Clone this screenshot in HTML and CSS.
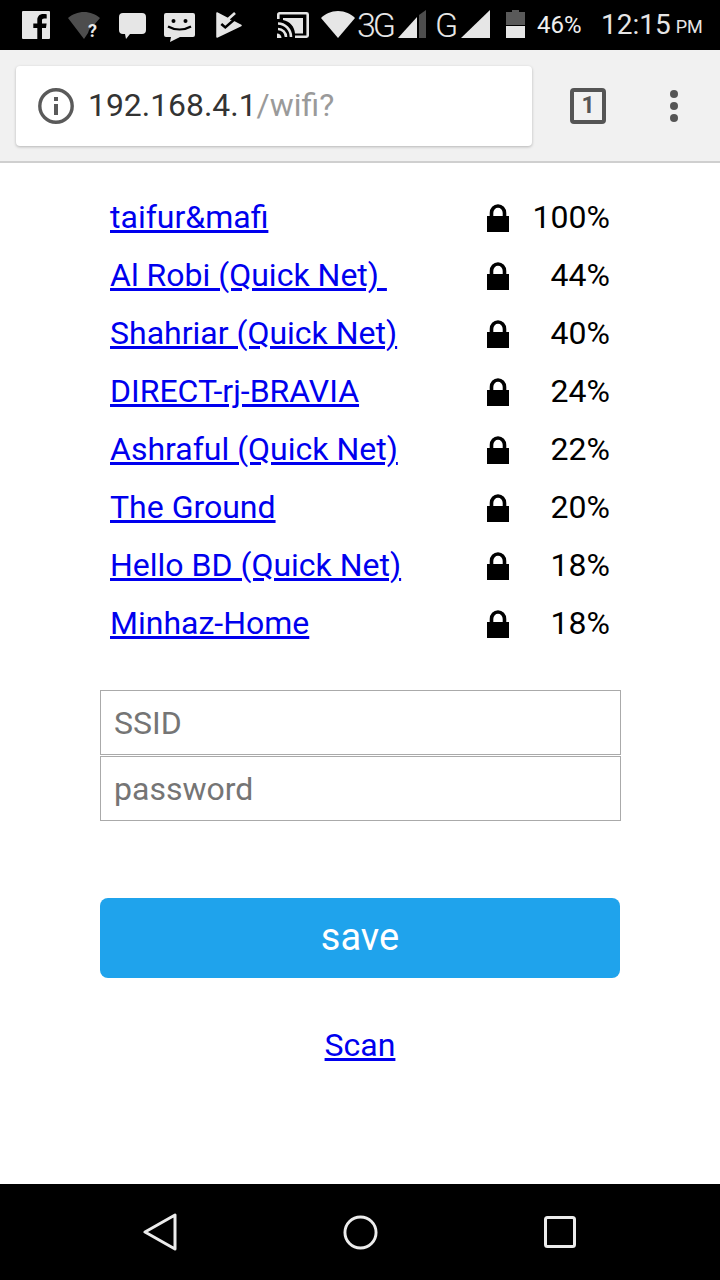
FILE: index.html
```html
<!DOCTYPE html>
<html lang="en">
<head>
    <meta charset="UTF-8">
    <title>192.168.4.1/wifi?</title>
    <link rel="stylesheet" href="styles.css">
</head>
<body>
    <div id="phone">
        <div class="status-bar">
            <svg class="ic ic-fb" width="28" height="28" viewBox="0 0 28 28"><path fill="#e6e6e6" d="M1 0h26a1 1 0 0 1 1 1v26a1 1 0 0 1-1 1h-7V17h4l.6-4.6H20V9.6c0-1.4.4-2.2 2.3-2.2h2.4V3.3c-.5 0-1.900-.2-3.500-.2-3.500 0-5.900 2.100-5.900 6v3.300h-4V17h4v11H1a1 1 0 0 1-1-1V1a1 1 0 0 1 1-1z"/></svg>
            <svg class="ic ic-wifiq" width="33" height="30" viewBox="0 0 33 30"><path fill="#4d4d4d" d="M0 6C4 2.500 10 0 16 0s12 2.500 16 6l-6 7c-3 1-5 4-6 8l-4 6z"/><text x="20" y="25" class="q-mark">?</text></svg>
            <svg class="ic ic-bubble" width="27" height="26" viewBox="0 0 27 26"><path fill="#e6e6e6" d="M4 0h19a4 4 0 0 1 4 4v13a4 4 0 0 1-4 4H11l-4 5-1-5H4a4 4 0 0 1-4-4V4a4 4 0 0 1 4-4z"/></svg>
            <svg class="ic ic-smile" width="31" height="29" viewBox="0 0 31 29"><path fill="#e6e6e6" d="M2 0h27a2 2 0 0 1 2 2v20a2 2 0 0 1-2 2H16l-10 5 1-5H2a2 2 0 0 1-2-2V2a2 2 0 0 1 2-2z"/><circle cx="9.500" cy="8" r="2" fill="#000"/><circle cx="21.500" cy="8" r="2" fill="#000"/><path fill="none" stroke="#000" stroke-width="2.200" d="M4 13.500c7 4 16 4 23 0"/></svg>
            <svg class="ic ic-check" width="26" height="26" viewBox="0 0 26 26"><path fill="#e6e6e6" stroke="#e6e6e6" stroke-width="1.500" stroke-linejoin="round" d="M1 1l24 12.500L1 25z"/><path fill="none" stroke="#000" stroke-width="2.600" d="M5.300 12l4 3.400L20 6"/><path fill="none" stroke="#000" stroke-width="2" d="M12 4l3 3 8-7"/><path fill="none" stroke="#e6e6e6" stroke-width="2.600" d="M10 9l9-8"/></svg>
            <svg class="ic ic-cast" width="32" height="26" viewBox="0 0 32 26"><path fill="none" stroke="#e6e6e6" stroke-width="2.600" stroke-linejoin="round" d="M1.300 7V2.500a1.200 1.200 0 0 1 1.200-1.200h27a1.200 1.200 0 0 1 1.200 1.200v21a1.200 1.200 0 0 1-1.200 1.200H18"/><path fill="none" stroke="#e6e6e6" stroke-width="2.600" d="M1 11.500c7 0 13 6 13 13.500M1 17c4.500 0 8 3.500 8 8"/><path fill="#e6e6e6" d="M0 21.500a4.500 4.500 0 0 1 4.500 4.500H0zM6 6h20v15.500h-8C17.500 14.500 13 9.500 6 8z"/></svg>
            <svg class="ic ic-wifi" width="34" height="27" viewBox="0 0 34 27"><path fill="#e6e6e6" d="M0 7C4 3 10 0 17 0s13 3 17 7L17 27z"/></svg>
            <span class="st-3g">3G</span>
            <svg class="ic ic-sig1" width="28" height="28" viewBox="0 0 28 28"><path fill="#e6e6e6" d="M0 28L19 7v21z"/><path fill="#4d4d4d" d="M21 5l7-5v28h-7z"/></svg>
            <span class="st-g">G</span>
            <svg class="ic ic-sig2" width="29" height="28" viewBox="0 0 29 28"><path fill="#e6e6e6" d="M0 28L29 0v28z"/></svg>
            <svg class="ic ic-batt" width="19" height="28" viewBox="0 0 19 28"><path fill="#595959" d="M6 0h7v2h6v13H0V2h6z"/><path fill="#e6e6e6" d="M0 16h19v12H0z"/></svg>
            <span class="st-pct">46%</span>
            <span class="st-time">12:15</span>
            <span class="st-pm">PM</span>
        </div>

        <div class="toolbar">
            <div class="omnibox">
                <svg class="info" width="36" height="36" viewBox="0 0 36 36"><circle cx="18" cy="18" r="16.200" fill="none" stroke="#5a5a5a" stroke-width="3.400"/><rect x="16" y="16" width="4" height="11" fill="#5a5a5a"/><rect x="16" y="9" width="4" height="4" fill="#5a5a5a"/></svg>
                <span class="host">192.168.4.1</span><span class="path">/wifi?</span>
            </div>
            <div class="tabs">1</div>
            <div class="menu"><i></i><i></i><i></i></div>
        </div>

        <div class="page">
            <div class="list">
                <div class="net"><a href="#">taifur&amp;mafi</a><svg class="lock" width="22" height="28" viewBox="0 0 22 28"><use href="#lockshape"/></svg><span class="q">100%</span></div>
                <div class="net"><a href="#">Al Robi (Quick Net)&nbsp;</a><svg class="lock" width="22" height="28" viewBox="0 0 22 28"><use href="#lockshape"/></svg><span class="q">44%</span></div>
                <div class="net"><a href="#">Shahriar (Quick Net)</a><svg class="lock" width="22" height="28" viewBox="0 0 22 28"><use href="#lockshape"/></svg><span class="q">40%</span></div>
                <div class="net"><a href="#">DIRECT-rj-BRAVIA</a><svg class="lock" width="22" height="28" viewBox="0 0 22 28"><use href="#lockshape"/></svg><span class="q">24%</span></div>
                <div class="net"><a href="#">Ashraful (Quick Net)</a><svg class="lock" width="22" height="28" viewBox="0 0 22 28"><use href="#lockshape"/></svg><span class="q">22%</span></div>
                <div class="net"><a href="#">The Ground</a><svg class="lock" width="22" height="28" viewBox="0 0 22 28"><use href="#lockshape"/></svg><span class="q">20%</span></div>
                <div class="net"><a href="#">Hello BD (Quick Net)</a><svg class="lock" width="22" height="28" viewBox="0 0 22 28"><use href="#lockshape"/></svg><span class="q">18%</span></div>
                <div class="net"><a href="#">Minhaz-Home</a><svg class="lock" width="22" height="28" viewBox="0 0 22 28"><use href="#lockshape"/></svg><span class="q">18%</span></div>
            </div>
            <form class="wifi-form">
                <input type="text" placeholder="SSID">
                <input type="text" placeholder="password">
                <button type="button">save</button>
            </form>
            <div class="scan"><a href="#">Scan</a></div>
        </div>

        <div class="nav-bar">
            <svg width="34" height="38" viewBox="0 0 34 38"><path fill="none" stroke="#ececec" stroke-width="3" stroke-linejoin="round" d="M2 19L32 2v34z"/></svg>
            <svg width="35" height="35" viewBox="0 0 36 36"><circle cx="18" cy="18" r="16" fill="none" stroke="#ececec" stroke-width="3"/></svg>
            <svg width="32" height="32" viewBox="0 0 32 32"><rect x="1.500" y="1.500" width="29" height="29" rx="2" fill="none" stroke="#ececec" stroke-width="3"/></svg>
        </div>
    </div>
    <svg class="defs" width="0" height="0">
        <defs>
            <g id="lockshape">
                <path fill="#000" d="M0 12h22v16H0z"/>
                <path fill="none" stroke="#000" stroke-width="3.600" d="M4.500 13V9a6.500 7 0 0 1 13 0v4"/>
            </g>
        </defs>
    </svg>
</body>
</html>
```

FILE: styles.css
```css
html,body,div,a,span,form,input,button{
    margin: 0;
    padding: 0;
}
body{
    width: 720px;
    height: 1280px;
    overflow: hidden;
    font: 32px/1.2 Roboto, Arial, sans-serif;
    background-color: #fff;
}
#phone{
    display: flex;
    flex-direction: column;
    height: 1280px;
}
.defs{
    display: block;
    height: 0;
}

/* status bar */
.status-bar{
    display: flex;
    align-items: flex-start;
    height: 50px;
    padding-left: 22px;
    background-color: #000;
    color: #e6e6e6;
    flex: none;
}
.ic{
    display: block;
    flex: none;
}
.ic-fb{ margin-top: 11px; }
.ic-wifiq{ margin: 12px 0 0 18px; }
.ic-bubble{ margin: 13px 0 0 18px; }
.ic-smile{ margin: 13px 0 0 18px; }
.ic-check{ margin: 12px 0 0 21px; }
.ic-cast{ margin: 12px 0 0 35px; }
.ic-wifi{ margin: 11px 0 0 12px; }
.ic-sig1{ margin: 10px 0 0 5px; }
.ic-sig2{ margin: 10px 0 0 4px; }
.ic-batt{ margin: 10px 0 0 16px; }
.q-mark{
    font: 700 18px Roboto, sans-serif;
    fill: #e6e6e6;
}
.st-3g,.st-g{
    font-weight: 300;
    font-size: 34px;
    line-height: 50px;
}
.st-3g{
    margin-left: 2px;
    letter-spacing: -3px;
    width: 36px;
}
.st-g{
    margin-left: 9px;
    width: 22px;
}
.st-pct{
    font-size: 24px;
    line-height: 50px;
    margin-left: 12px;
    width: 43px;
    color: #f0f0f0;
}
.st-time{
    font-size: 28px;
    line-height: 50px;
    margin-left: 21px;
}
.st-pm{
    font-size: 18px;
    line-height: 54px;
    margin-left: 5px;
}

/* browser toolbar */
.toolbar{
    display: flex;
    align-items: center;
    flex: none;
    height: 113px;
    padding: 0 0 0 16px;
    box-sizing: border-box;
    background-color: #f1f1f1;
    border-bottom: 2px solid #cfcfcf;
}
.omnibox{
    display: flex;
    align-items: center;
    width: 516px;
    height: 80px;
    box-sizing: border-box;
    padding: 0 0 0 22px;
    background-color: #fff;
    border-radius: 4px;
    box-shadow: 0 1px 3px rgba(0,0,0,.25);
    font-size: 31.9px;
}
.info{
    margin-right: 14px;
}
.host{
    color: #333;
}
.path{
    color: #9a9a9a;
}
.tabs{
    box-sizing: border-box;
    width: 36px;
    height: 36px;
    margin-left: 38px;
    border: 4px solid #555;
    border-radius: 4px;
    color: #555;
    font: 700 23px/28px Roboto, sans-serif;
    text-align: center;
}
.menu{
    display: flex;
    flex-direction: column;
    gap: 4px;
    margin-left: 64px;
}
.menu i{
    display: block;
    width: 8px;
    height: 8px;
    border-radius: 50%;
    background-color: #555;
}

/* page */
.page{
    flex: 1;
    padding: 25px 100px 0;
}
.net{
    display: flex;
    align-items: center;
    height: 58px;
    padding: 0 10px;
}
.net a{
    flex: 1;
}
a{
    color: #00e;
}
.lock{
    display: block;
    margin-top: 2px;
}
.q{
    width: 101px;
    text-align: right;
    color: #000;
}
.wifi-form{
    margin-top: 38px;
}
.wifi-form input{
    display: block;
    box-sizing: border-box;
    width: 521px;
    height: 65px;
    margin-bottom: 1px;
    padding: 0 13px;
    border: 1px solid #aaa;
    border-radius: 0;
    outline: 0;
    font: 32px Roboto, sans-serif;
    background-color: #fff;
}
.wifi-form input::placeholder{
    color: #757575;
    opacity: 1;
}
.wifi-form button{
    display: block;
    width: 520px;
    height: 80px;
    margin-top: 77px;
    padding-bottom: 2px;
    border: 0;
    border-radius: 8px;
    background-color: #1fa3ec;
    color: #fff;
    font: 38px Roboto, sans-serif;
}
.scan{
    margin-top: 38px;
    line-height: 58px;
    text-align: center;
}

/* android nav */
.nav-bar{
    display: flex;
    align-items: center;
    justify-content: space-between;
    flex: none;
    height: 96px;
    padding: 0 144px 0 143px;
    background-color: #000;
}
```
